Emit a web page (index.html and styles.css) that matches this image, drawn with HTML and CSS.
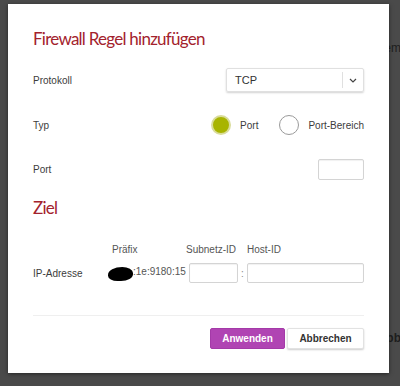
FILE: index.html
```html
<!DOCTYPE html>
<html lang="de">
<head>
    <meta charset="UTF-8">
    <meta name="viewport" content="width=device-width, initial-scale=1.0">
    <title>Firewall Regel hinzufügen</title>
    <link rel="stylesheet" href="styles.css">
</head>
<body>
    <!-- Seite hinter dem Overlay -->
    <span class="behind behind-em">em</span>
    <span class="behind behind-bb">Abb</span>

    <div class="dialog">
        <h1>Firewall Regel hinzufügen</h1>

        <div class="row row-protokoll">
            <span class="label">Protokoll</span>
            <div class="select">
                <span class="select-value">TCP</span>
                <span class="select-arrow">
                    <svg width="8" height="5" viewBox="0 0 8 5"><path d="M1 1 L4 4 L7 1" fill="none" stroke="#444" stroke-width="1.2"/></svg>
                </span>
            </div>
        </div>

        <div class="row row-typ">
            <span class="label">Typ</span>
            <div class="radios">
                <label class="radio"><span class="dot checked"></span>Port</label>
                <label class="radio"><span class="dot"></span>Port-Bereich</label>
            </div>
        </div>

        <div class="row row-port">
            <span class="label">Port</span>
            <input type="text" class="input input-port">
        </div>

        <h2>Ziel</h2>

        <div class="ip-grid">
            <span class="head head-prefix">Präfix</span>
            <span class="head head-subnet">Subnetz-ID</span>
            <span class="head head-host">Host-ID</span>

            <span class="label">IP-Adresse</span>
            <span class="prefix"><span class="blob"></span>:1e:9180:15</span>
            <input type="text" class="input">
            <span class="colon">:</span>
            <input type="text" class="input">
        </div>

        <hr class="divider">

        <div class="actions">
            <button class="btn btn-primary">Anwenden</button>
            <button class="btn btn-secondary">Abbrechen</button>
        </div>
    </div>
</body>
</html>
```

FILE: styles.css
```css
body {
    margin: 0;
    width: 400px;
    height: 386px;
    overflow: hidden;
    background-color: #4a4a4a;
    font-family: "Liberation Sans", Arial, sans-serif;
    font-size: 10px;
    color: #3c3c3c;
    position: relative;
}

.behind {
    position: absolute;
    color: #1e1e1e;
    font-size: 12px;
}

.behind-em {
    top: 41px;
    right: -1px;
}

.behind-bb {
    top: 331px;
    right: -1px;
    font-weight: bold;
}

.dialog {
    position: relative;
    margin: 4px 0 0 8px;
    width: 381px;
    height: 369px;
    box-sizing: border-box;
    padding: 24px 25px 0 25px;
    background: #fff;
    box-shadow: 0 1px 4px rgba(0, 0, 0, 0.5);
}

h1, h2 {
    margin: 0;
    font-family: Lato, "Liberation Sans", sans-serif;
    font-weight: normal;
    font-size: 17px;
    letter-spacing: -0.75px;
    line-height: 22px;
    height: 22px;
    color: #a3222d;
}

h2 {
    margin-top: 17px;
}

.row {
    display: flex;
    align-items: center;
}

.label {
    color: #3c3c3c;
}

.row-protokoll {
    margin-top: 18px;
    height: 24px;
}

.select {
    margin-left: auto;
    width: 138px;
    height: 24px;
    box-sizing: border-box;
    display: flex;
    align-items: center;
    border: 1px solid #e0e0e0;
    border-radius: 2px;
    box-shadow: 0 1px 2px rgba(0, 0, 0, 0.18);
}

.select-value {
    flex: 1;
    padding-left: 8px;
    font-size: 11px;
    color: #333;
}

.select-arrow {
    width: 20px;
    height: 16px;
    border-left: 1px solid #e0e0e0;
    display: flex;
    align-items: center;
    justify-content: center;
}

.row-typ {
    margin-top: 23px;
    height: 20px;
}

.radios {
    margin-left: auto;
    display: flex;
    gap: 21px;
}

.radio {
    display: flex;
    align-items: center;
    gap: 9px;
    color: #3c3c3c;
}

.dot {
    width: 20px;
    height: 20px;
    box-sizing: border-box;
    border-radius: 50%;
    border: 1px solid #9a9a9a;
    background: #fff;
}

.dot.checked {
    background: #a8b400;
    border: 2px solid #d9dc9a;
}

.row-port {
    margin-top: 24px;
    height: 21px;
}

.input {
    height: 20px;
    box-sizing: border-box;
    margin: 0;
    border: 1px solid #d4d4d4;
    border-radius: 2px;
    box-shadow: inset 0 1px 1px rgba(0, 0, 0, 0.06);
    background: #fff;
    width: 100%;
}

.input-port {
    margin-left: auto;
    width: 46px;
    height: 21px;
}

.ip-grid {
    margin-top: 23px;
    display: grid;
    grid-template-columns: 75px 81px 49px 9px 1fr;
    grid-template-rows: 14px 20px;
    row-gap: 7px;
    align-items: center;
}

.head {
    color: #555;
}

.head-prefix {
    grid-column: 2;
    padding-left: 4px;
}

.head-subnet {
    grid-column: 3 / span 2;
    margin-left: -3px;
}

.head-host {
    grid-column: 5;
}

.prefix {
    display: flex;
    align-items: center;
    color: #555;
    margin-top: -4px;
}

.blob {
    display: inline-block;
    width: 25px;
    height: 14px;
    margin-top: 5px;
    background: #000;
    border-radius: 60% 45% 50% 40%;
}

.colon {
    text-align: center;
    color: #888;
}

.divider {
    margin: 32px 0 0 0;
    border: 0;
    border-top: 1px solid #efefef;
}

.actions {
    margin-top: 12px;
    display: flex;
    justify-content: flex-end;
    gap: 2px;
}

.btn {
    height: 21px;
    padding: 0;
    font-family: "Liberation Sans", Arial, sans-serif;
    font-size: 10px;
    font-weight: bold;
    border-radius: 2px;
    cursor: pointer;
}

.btn-primary {
    width: 75px;
    background: #b044b3;
    color: #fff;
    border: 1px solid #a43aa8;
}

.btn-secondary {
    width: 77px;
    background: #fff;
    color: #333;
    border: 1px solid #e2e2e2;
    box-shadow: 0 1px 2px rgba(0, 0, 0, 0.2);
}
```
